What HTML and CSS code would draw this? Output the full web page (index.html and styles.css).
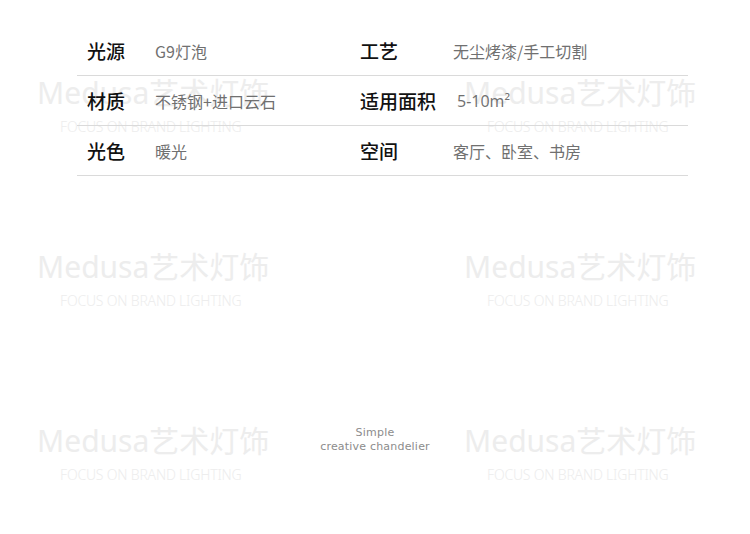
FILE: index.html
```html
<!DOCTYPE html>
<html lang="zh-CN">
  <head>
    <meta charset="UTF-8" />
    <meta name="viewport" content="width=device-width, initial-scale=1.0" />
    <title>Medusa 参数</title>
    <link rel="stylesheet" href="styles.css">
  </head>
  <body>
    <div class="page">
      <!-- watermark layer behind the content -->
      <div class="watermarks">
        <div class="mark"><span class="mark-name">Medusa艺术灯饰</span><span class="mark-sub">FOCUS ON BRAND LIGHTING</span></div>
        <div class="mark"><span class="mark-name">Medusa艺术灯饰</span><span class="mark-sub">FOCUS ON BRAND LIGHTING</span></div>
        <div class="mark"><span class="mark-name">Medusa艺术灯饰</span><span class="mark-sub">FOCUS ON BRAND LIGHTING</span></div>
        <div class="mark"><span class="mark-name">Medusa艺术灯饰</span><span class="mark-sub">FOCUS ON BRAND LIGHTING</span></div>
        <div class="mark"><span class="mark-name">Medusa艺术灯饰</span><span class="mark-sub">FOCUS ON BRAND LIGHTING</span></div>
        <div class="mark"><span class="mark-name">Medusa艺术灯饰</span><span class="mark-sub">FOCUS ON BRAND LIGHTING</span></div>
      </div>

      <div class="specs">
        <div class="spec-row">
          <span class="label">光源</span>
          <span class="value">G9灯泡</span>
          <span class="label">工艺</span>
          <span class="value">无尘烤漆/手工切割</span>
        </div>
        <div class="spec-row">
          <span class="label">材质</span>
          <span class="value">不锈钢+进口云石</span>
          <span class="label">适用面积</span>
          <span class="value value-num">5-10m²</span>
        </div>
        <div class="spec-row">
          <span class="label">光色</span>
          <span class="value">暖光</span>
          <span class="label">空间</span>
          <span class="value">客厅、卧室、书房</span>
        </div>
      </div>

      <p class="tagline">Simple<br />creative chandelier</p>
    </div>
  </body>
</html>
```

FILE: styles.css
```css
html,
body {
  margin: 0;
  padding: 0;
  background: #fff;
}

body {
  font-family: "Noto Sans CJK SC", "Noto Sans", sans-serif;
}

.page {
  position: relative;
  width: 750px;
  height: 534px;
  overflow: hidden;
}

.watermarks {
  position: absolute;
  left: 37px;
  top: 73px;
  display: grid;
  grid-template-columns: 427px 300px;
  grid-auto-rows: 174px;
  z-index: 0;
}

.mark {
  display: flex;
  flex-direction: column;
  align-items: flex-start;
}

.mark-name {
  font-family: "Noto Sans", "Noto Sans CJK SC", sans-serif;
  font-size: 30px;
  line-height: 40px;
  color: #ededed;
  white-space: nowrap;
}

.mark-sub {
  margin-left: 23px;
  margin-top: 7px;
  font-family: "Noto Sans", sans-serif;
  font-weight: 300;
  font-size: 14px;
  line-height: 14px;
  letter-spacing: -0.2px;
  color: #ededed;
  white-space: nowrap;
}

.specs {
  position: relative;
  z-index: 1;
  margin: 26px 0 0 77px;
  width: 611px;
}

.spec-row {
  display: grid;
  grid-template-columns: 68px 205px 93px 1fr;
  align-items: center;
  height: 49px;
  padding-left: 10px;
  border-bottom: 1px solid #dadada;
}

.label {
  font-size: 19px;
  font-weight: 500;
  color: #111;
}

.value {
  font-size: 16px;
  color: #707070;
}

.value-num {
  padding-left: 4px;
  font-family: "Open Sans", "Noto Sans", sans-serif;
}

.tagline {
  position: relative;
  z-index: 1;
  margin: 250px 0 0;
  text-align: center;
  font-family: "DejaVu Sans", sans-serif;
  font-size: 11px;
  line-height: 14px;
  letter-spacing: 0.2px;
  color: #8c8c8c;
}
```
